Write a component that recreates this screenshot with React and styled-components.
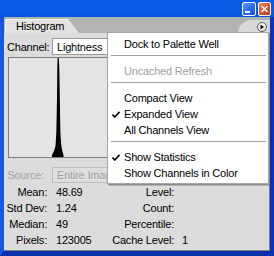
import React from 'react';
import styled, { createGlobalStyle } from 'styled-components';

const Global = createGlobalStyle`
  html, body { margin: 0; padding: 0; background: #ffffff; }
  body {
    font-family: Tahoma, "Liberation Sans", "DejaVu Sans", sans-serif;
    font-size: 11px;
    letter-spacing: -0.2px;
    color: #000;
  }
  * { box-sizing: border-box; }
`;

const Window = styled.div`
  width: 274px;
  height: 256px;
  display: flex;
  flex-direction: column;
  position: relative;
  overflow: hidden;
  background: #0b3fd0;
`;

const TitleBar = styled.div`
  height: 17px;
  flex: none;
  display: flex;
  justify-content: flex-end;
  align-items: flex-start;
  gap: 2px;
  padding: 2px 3px 0 0;
  background: linear-gradient(180deg, #0b5ce6 0%, #0a5ae6 60%, #0855de 100%);
`;

const TitleButton = styled.div`
  width: ${p => (p.$close ? 13 : 14)}px;
  height: 14px;
  border: 1px solid #ffffff;
  border-radius: 2px;
  display: flex;
  align-items: center;
  justify-content: center;
  background: ${p =>
    p.$close
      ? 'linear-gradient(135deg, #f08a66 0%, #e05530 45%, #c7391a 100%)'
      : 'linear-gradient(135deg, #5e9bff 0%, #2c6cf0 50%, #1850d8 100%)'};
`;

const Frame = styled.div`
  flex: 1;
  display: flex;
  min-height: 0;
  border-left: 4px solid #1558e6;
  border-right: 4px solid #0a34bc;
  border-bottom: 5px solid #0a30aa;
`;

const Panel = styled.div`
  flex: 1;
  display: flex;
  flex-direction: column;
  background: #dcdcdc;
  box-shadow: inset -1px -1px 0 #7c7c7c;
`;

const TabBar = styled.div`
  height: 16px;
  flex: none;
  display: flex;
  align-items: flex-end;
  justify-content: space-between;
  padding-left: 1px;
  background: #b3b3b3;
`;

const Tab = styled.div`
  height: 14px;
  width: 74px;
  padding-left: 11px;
  line-height: 14px;
  background: #e2e2e2;
  border-top-left-radius: 2px;
  clip-path: polygon(0 0, 63px 0, 74px 100%, 0 100%);
  box-shadow: inset 1px 1px 0 #f6f6f6;
`;

const Well = styled.div`
  width: 32px;
  height: 13px;
  display: flex;
  align-items: center;
  justify-content: flex-end;
  padding-right: 3px;
  background: #d8d8d8;
  border-top-left-radius: 14px 13px;
`;

const MenuButton = styled.div`
  width: 10px;
  height: 10px;
  border-radius: 50%;
  border: 1px solid #5a5a5a;
  background: radial-gradient(circle at 35% 35%, #ffffff 0%, #e8e8e8 60%, #bdbdbd 100%);
  display: flex;
  align-items: center;
  justify-content: center;
`;

const Body = styled.div`
  flex: 1;
  display: flex;
  flex-direction: column;
  padding-top: 5px;
`;

const ChannelRow = styled.div`
  height: 17px;
  display: flex;
  align-items: center;
  padding-left: 3px;
`;

const RowLabel = styled.span`
  width: 45px;
  flex: none;
`;

const Field = styled.div`
  height: ${p => p.$h || 17}px;
  width: 160px;
  flex: none;
  display: flex;
  align-items: center;
  padding-left: 4px;
  border: 1px solid ${p => (p.$disabled ? '#bdbdbd' : '#9a9a9a')};
  background: ${p => (p.$disabled ? '#dedede' : '#ffffff')};
  color: ${p => (p.$disabled ? '#a3a3a3' : '#000')};
  white-space: nowrap;
  overflow: hidden;
`;

const Histogram = styled.div`
  margin: 2px 0 0 4px;
  width: 258px;
  height: 101px;
  flex: none;
  border: 1px solid #7d7d7d;
  background: #e4e4e4;
`;

const SourceRow = styled.div`
  margin-top: 8px;
  height: 17px;
  display: flex;
  align-items: center;
`;

const SourceLabel = styled.span`
  width: 40px;
  margin-right: 8px;
  text-align: right;
  color: #a3a3a3;
  flex: none;
`;

const Stats = styled.div`
  margin-top: 1px;
  display: grid;
  grid-template-columns: 43px 58px 69px 1fr;
  grid-auto-rows: 16px;
  align-items: center;
`;

const StatLabel = styled.span`
  text-align: right;
  white-space: nowrap;
`;

const StatValue = styled.span`
  padding-left: ${p => p.$pad || 9}px;
  white-space: nowrap;
`;

const Menu = styled.div`
  position: absolute;
  left: 107px;
  top: 32px;
  width: 162px;
  height: 152px;
  padding: 3px 0;
  background: #ffffff;
  border: 1px solid #a6a6a6;
  box-shadow: 1px 1px 0 #8a8a8a, 2px 2px 0 rgba(0, 0, 0, 0.18);
  display: flex;
  flex-direction: column;
`;

const MenuItem = styled.div`
  height: 16px;
  flex: none;
  display: flex;
  align-items: center;
  padding-left: 4px;
  color: ${p => (p.$disabled ? '#a0a0a0' : '#000')};
  white-space: nowrap;
`;

const CheckSlot = styled.span`
  width: 12px;
  flex: none;
  display: flex;
  align-items: center;
`;

const Separator = styled.div`
  height: 11px;
  flex: none;
  margin: 0 2px 0 3px;
  display: flex;
  align-items: flex-start;
  padding-top: 3px;
  &::before {
    content: '';
    display: block;
    width: 100%;
    height: 1px;
    background: #a5a5a5;
  }
`;

const Check = () => (
  <svg width="8" height="7" viewBox="0 0 8 7">
    <path d="M0.5 3.5 L2.8 6 L7.5 0.8" fill="none" stroke="#000" strokeWidth="1.6" />
  </svg>
);

const Item = ({ checked, disabled, children }) => (
  <MenuItem $disabled={disabled}>
    <CheckSlot>{checked ? <Check /> : null}</CheckSlot>
    {children}
  </MenuItem>
);

const stats = [
  ['Mean:', '48.69', 'Level:', ''],
  ['Std Dev:', '1.24', 'Count:', ''],
  ['Median:', '49', 'Percentile:', ''],
  ['Pixels:', '123005', 'Cache Level:', '1'],
];

export default function App() {
  return (
    <>
      <Global />
      <Window>
        <TitleBar>
          <TitleButton>
            <svg width="12" height="12" viewBox="0 0 12 12">
              <rect x="2" y="8" width="5" height="2" fill="#fff" />
            </svg>
          </TitleButton>
          <TitleButton $close>
            <svg width="11" height="12" viewBox="0 0 11 12">
              <path d="M2.5 3 L8.5 9 M8.5 3 L2.5 9" stroke="#fff" strokeWidth="1.6" />
            </svg>
          </TitleButton>
        </TitleBar>
        <Frame>
          <Panel>
            <TabBar>
              <Tab>Histogram</Tab>
              <Well>
                <MenuButton>
                  <svg width="6" height="6" viewBox="0 0 6 6">
                    <path d="M1.5 0.5 L5 3 L1.5 5.5 Z" fill="#000" />
                  </svg>
                </MenuButton>
              </Well>
            </TabBar>
            <Body>
              <ChannelRow>
                <RowLabel>Channel:</RowLabel>
                <Field>Lightness</Field>
              </ChannelRow>
              <Histogram>
                <svg width="256" height="99" viewBox="0 0 256 99">
                  <polygon
                    fill="#000"
                    points="48.6,0 49.8,0 50.3,10 50.8,40 51.4,75 52.3,88 53.3,93 54.5,97 54.5,99 43,99 43,97 45,93 46.5,88 47.3,75 48,40 48.3,10"
                  />
                </svg>
              </Histogram>
              <SourceRow>
                <SourceLabel>Source:</SourceLabel>
                <Field $disabled $h={16}>Entire Image</Field>
              </SourceRow>
              <Stats>
                {stats.map(([a, b, c, d]) => (
                  <React.Fragment key={a}>
                    <StatLabel>{a}</StatLabel>
                    <StatValue>{b}</StatValue>
                    <StatLabel>{c}</StatLabel>
                    <StatValue $pad={8}>{d}</StatValue>
                  </React.Fragment>
                ))}
              </Stats>
            </Body>
          </Panel>
        </Frame>
        <Menu>
          <Item>Dock to Palette Well</Item>
          <Separator />
          <Item disabled>Uncached Refresh</Item>
          <Separator />
          <Item>Compact View</Item>
          <Item checked>Expanded View</Item>
          <Item>All Channels View</Item>
          <Separator />
          <Item checked>Show Statistics</Item>
          <Item>Show Channels in Color</Item>
        </Menu>
      </Window>
    </>
  );
}
